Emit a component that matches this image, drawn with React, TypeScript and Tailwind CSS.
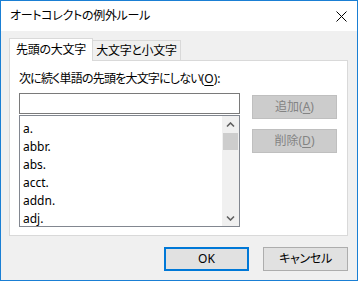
import { ReactNode } from "react";

const jp = "font-['Noto_Sans','Noto_Sans_CJK_JP',sans-serif] [font-feature-settings:'palt']";

const words = ["a.", "abbr.", "abs.", "acct.", "addn.", "adj."];

function Chevron({ down }: { down?: boolean }) {
  return (
    <svg width="9" height="6" viewBox="0 0 9 6" className="block">
      <path
        d={down ? "M1 1.5 L4.5 5 L8 1.5" : "M1 4.5 L4.5 1 L8 4.5"}
        fill="none"
        stroke="#606060"
        strokeWidth="1.6"
      />
    </svg>
  );
}

function SideButton({ children }: { children: ReactNode }) {
  return (
    <div className="w-[85px] h-[24px] flex items-center justify-center bg-[#cccccc] border border-[#bfbfbf] text-[12px] leading-none text-[#838383]">
      {children}
    </div>
  );
}

export default function App() {
  return (
    <div className={`w-[358px] h-[281px] flex flex-col border border-[#1a7fd4] bg-[#f0f0f0] text-black ${jp}`}>
      {/* Title bar */}
      <div className="h-[30px] bg-white flex items-center justify-between pl-[9px] pr-[10px] shrink-0">
        <span className="text-[12px] leading-none tracking-[-0.3px]">オートコレクトの例外ルール</span>
        <svg width="11" height="11" viewBox="0 0 11 11" className="block">
          <path d="M0.5 0.5 L10.5 10.5 M10.5 0.5 L0.5 10.5" stroke="#000" strokeWidth="1" />
        </svg>
      </div>

      {/* Body */}
      <div className="flex-1 flex flex-col pl-[8px] pr-[9px] pt-[7px]">
        {/* Tabs */}
        <div className="flex items-end h-[22px]">
          <div className="relative z-10 h-[23px] -mb-px w-[84px] bg-white border border-b-0 border-[#d9d9d9] flex items-center justify-center text-[12px] leading-none tracking-[-0.3px]">
            先頭の大文字
          </div>
          <div className="h-[20px] w-[89px] -ml-px border border-b-0 border-[#d9d9d9] bg-[#f0f0f0] flex items-center justify-center text-[12px] leading-none tracking-[-0.3px]">
            大文字と小文字
          </div>
        </div>

        {/* Panel */}
        <div className="h-[176px] bg-white border border-[#d9d9d9] pl-[9px] pt-[10px]">
          <div className="h-[16px] flex items-center text-[12px] leading-none whitespace-pre">
            <span className="tracking-[-0.8px]">次に続く単語の先頭を大文字にしない</span>
            <span>(<span className="underline underline-offset-2">O</span>):</span>
          </div>
          <div className="flex gap-[12px] mt-[6px]">
            <div className="w-[221px] flex flex-col">
              <div className="h-[21px] border border-[#7a7a7a] bg-white" />
              <div className="mt-[1px] h-[112px] border border-[#828790] bg-white flex">
                <div className="flex-1 pl-[3px] pt-[4px] font-['Noto_Sans',sans-serif] text-[12px] leading-[18px]">
                  {words.map((w) => (
                    <div key={w}>{w}</div>
                  ))}
                </div>
                <div className="w-[17px] bg-[#f0f0f0] flex flex-col">
                  <div className="h-[17px] flex items-center justify-center">
                    <Chevron />
                  </div>
                  <div className="h-[17px] mx-px bg-[#cdcdcd]" />
                  <div className="flex-1" />
                  <div className="h-[17px] flex items-center justify-center">
                    <Chevron down />
                  </div>
                </div>
              </div>
            </div>
            <div className="flex flex-col gap-[10px] pt-[2px]">
              <SideButton>
                追加(<span className="underline underline-offset-2">A</span>)
              </SideButton>
              <SideButton>
                削除(<span className="underline underline-offset-2">D</span>)
              </SideButton>
            </div>
          </div>
        </div>

        {/* Footer buttons */}
        <div className="flex justify-end gap-[14px] mt-[11px]">
          <div className="w-[85px] h-[24px] flex items-center justify-center bg-[#e1e1e1] border-2 border-[#0078d7] text-[12px] leading-none">
            OK
          </div>
          <div className="w-[85px] h-[24px] flex items-center justify-center bg-[#e1e1e1] border border-[#adadad] text-[12px] leading-none tracking-[-0.3px]">
            キャンセル
          </div>
        </div>
      </div>
    </div>
  );
}
